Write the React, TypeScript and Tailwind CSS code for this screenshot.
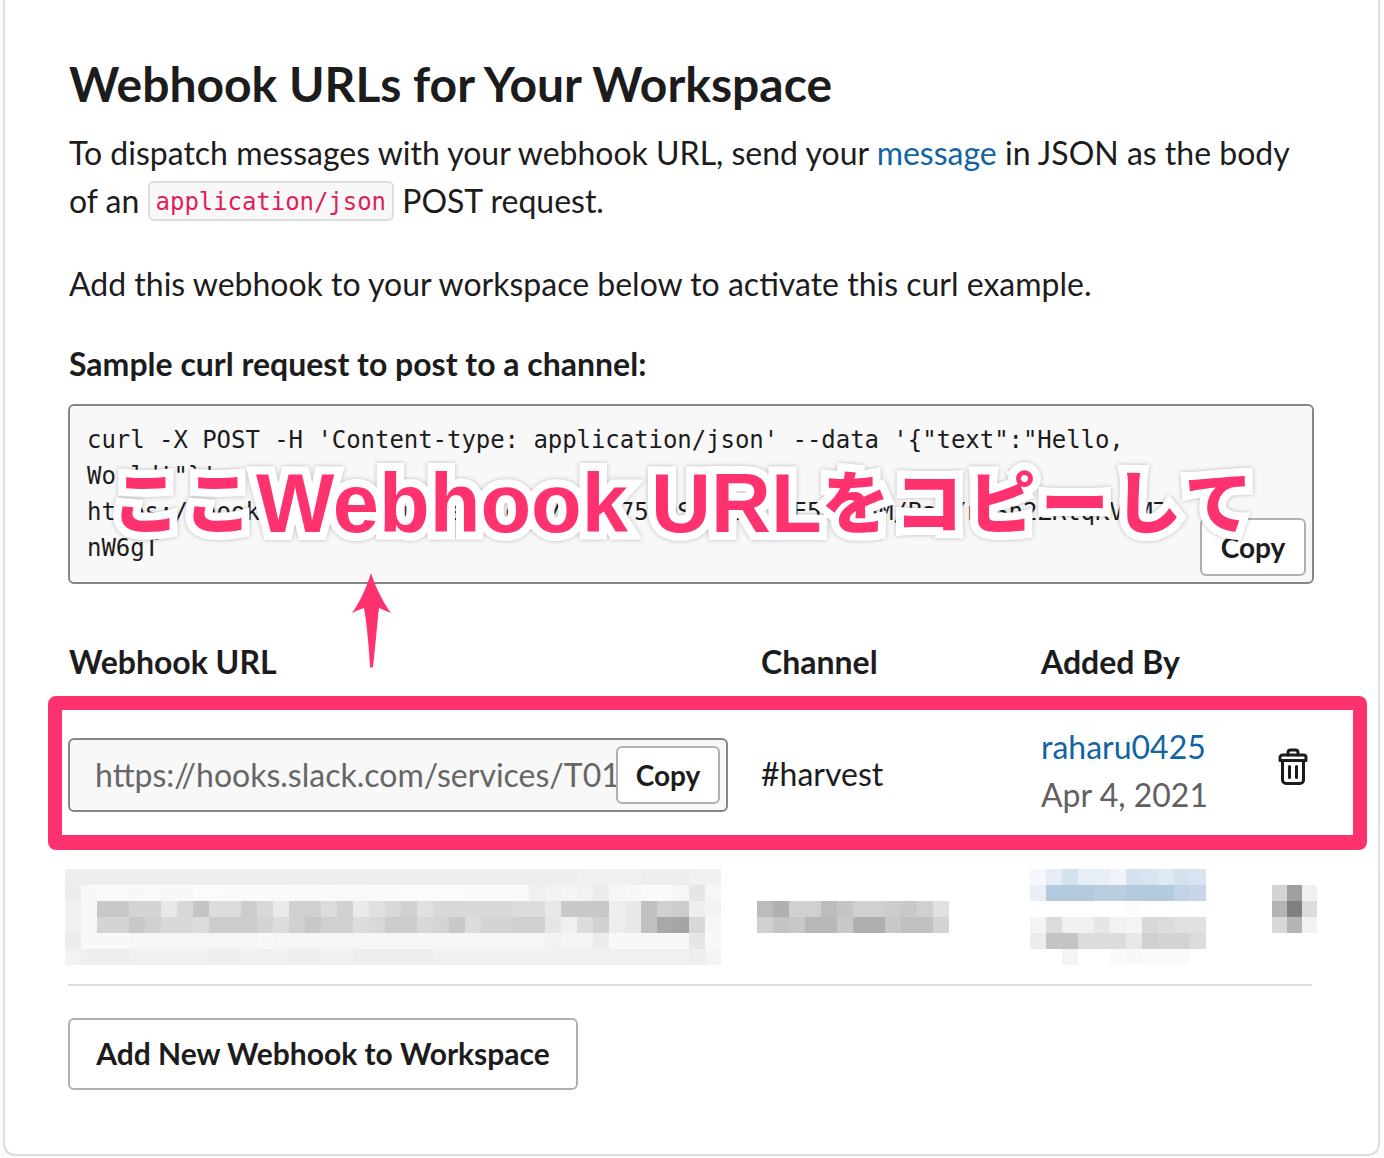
const urlMosaic = [
  'ee ee ee ee ee ee ee ee ee ee ee ee ee ee ee ee ee ee ee ee ee ee ee ee ee ee ee ee ee ee ee ee f0 f0 f0 f0 ee ee ee f0 f0',
  'ec f8 f9 f9 f8 f9 f8 f8 fb fb fa fa fa fa f9 f9 fa f9 f9 fa fa fb fb fb fb fa fa fa fa f0 f2 f4 f2 ec f6 f8 fa fa f6 e6 f6',
  'f0 f8 c8 c8 d4 d4 e8 d8 c4 dc dc cc d8 ea d0 d0 dc d0 ea e0 d8 d0 e0 d8 d8 d8 d8 d8 dc dc e8 c8 c8 c8 ee e8 c0 d0 cc ee f2',
  'f0 f8 d4 d4 c8 d0 d8 d8 dc cc cc cc d4 dc d0 c8 d0 d0 dc d8 cc cc d8 d4 c8 dc d4 d4 d0 d0 e6 f0 dc d0 ee e8 c0 a8 a4 d8 f6',
  'ec f8 f8 f8 f6 f6 f6 f6 f6 f6 f6 f6 f8 f6 f6 f6 f6 f6 f6 f6 f6 f6 f6 f6 f6 f6 f6 f6 f6 f6 f2 f4 f4 ec f8 f8 f8 f8 f8 e6 f8',
  'f2 ee ee ee f0 f0 f0 f0 f0 ef ef f0 f0 f0 ef ef f0 f0 ee ee ee ee ee f0 f0 f0 f0 f0 f0 f0 f0 f0 f0 f0 f0 f0 f0 f0 f0 ee f4',
]
const channelMosaic = [
  'bc b0 d0 d0 bc c4 d0 d0 cc c8 d0 e0',
  'd0 c4 c8 b8 b8 c8 b0 b0 c8 c0 c0 d4',
]
const nameMosaic = [
  'f4f7fb e6edf5 d4e1ee e8eef5 e8eef5 f0f4f9 d4e1ee d8e4ef e0e9f2 d4e1ee d8e4ef',
  'e8eff6 b4cade b4cade b2c9de bacee2 bacee2 b4cade b4cade b4cade c2d3e5 c6d7e8',
  'ffffff ffffff ffffff ffffff ffffff ffffff fbfcfd ffffff ffffff fbfdfe ffffff',
  'f4f4f4 dcdcdc f0f0f0 f0f0f0 e6e6e6 f2f2f2 f4f4f4 d8d8d8 dcdcdc e0e0e0 e0e0e0',
  'ececec c4c4c4 c4c4c4 dcdcdc dcdcdc dcdcdc e8e8e8 d0d0d0 d4d4d4 d4d4d4 dcdcdc',
  'ffffff ffffff f4f4f4 ffffff ffffff fafafa f8f8f8 fafafa fafafa fafafa ffffff',
]
const trashMosaic = [
  'd4 a0 f0',
  'b4 80 dc',
  'd8 b4 f2',
]

const Mosaic = ({ rows, cell = 'w-4' }: { rows: string[]; cell?: string }) => (
  <div className="flex flex-col shrink-0">
    {rows.map((row, i) => (
      <div key={i} className="flex">
        {row.split(' ').map((c, j) => (
          <div
            key={j}
            className={`${cell} h-4`}
            style={{ backgroundColor: c.length === 2 ? `#${c}${c}${c}` : `#${c}` }}
          />
        ))}
      </div>
    ))}
  </div>
)

const App = () => {
  return (
    <div className="w-[1384px] h-[1158px] bg-[#fbfbfb] overflow-hidden font-['Lato',sans-serif] text-[#1d1c1d]">
      <div className="relative w-[1377px] h-[1156px] ml-[3px] bg-white border-x-2 border-b-2 border-[#dedede] rounded-b-xl pl-[64px] pr-[65px]">
        <h1 className="pt-[54px] text-[48px] leading-[60px] font-bold">Webhook URLs for Your Workspace</h1>
        <p className="mt-[15px] text-[32px] leading-[48px]">
          To dispatch messages with your webhook URL, send your <a className="text-[#1264a3]">message</a> in JSON as the body of an{' '}
          <code className="inline-block h-[40px] px-[6px] align-[3px] leading-[38px] text-[24px] tracking-[-0.05px] text-[#e01e5a] bg-[#f8f8f8] border-2 border-[#dddddd] rounded-md font-['DejaVu_Sans_Mono',monospace]">application/json</code>{' '}
          POST request.
        </p>
        <p className="mt-[35px] text-[32px] leading-[48px]">Add this webhook to your workspace below to activate this curl example.</p>
        <h2 className="mt-[32px] text-[32px] leading-[48px] font-bold">Sample curl request to post to a channel:</h2>

        <div className="relative mt-[16px] w-[1246px] h-[180px] -ml-px pl-[17px] pr-[140px] pt-[16px] bg-[#f8f8f8] border-2 border-[#868686] rounded-md">
          <pre className="whitespace-pre-wrap break-words text-[24px] leading-[36px] tracking-[-0.05px] font-['DejaVu_Sans_Mono',monospace]">{`curl -X POST -H 'Content-type: application/json' --data '{"text":"Hello, World!"}' https://hooks.slack.com/services/T01Q75FQSUA/B01QE5NKXAM/BakYrQSn2ZRtqKVXM7nW6gT`}</pre>
          <button className="absolute right-[6px] bottom-[6px] w-[106px] h-[58px] bg-white border-2 border-[#b0b0b0] rounded-md text-[28px] font-bold">Copy</button>
        </div>

        <div className="flex mt-[54px] text-[32px] leading-[48px] font-bold">
          <div className="w-[692px]">Webhook URL</div>
          <div className="w-[280px]">Channel</div>
          <div>Added By</div>
        </div>

        <div className="flex items-center h-[144px] mt-[17px] text-[32px] leading-[48px]">
          <div className="relative w-[660px] h-[74px] -ml-px mr-[33px] pl-[25px] bg-[#f8f8f8] border-2 border-[#868686] rounded-md flex items-center text-[#666666] shrink-0">
            <div className="w-[523px] overflow-hidden whitespace-nowrap -mt-px">https://hooks.slack.com/services/T01Q75FQSUA/B01QE5NKXAM</div>
            <button className="absolute right-[6px] top-[6px] w-[104px] h-[58px] bg-white border-2 border-[#b0b0b0] rounded-md text-[28px] font-bold text-[#1d1c1d]">Copy</button>
          </div>
          <div className="w-[280px] -mt-[2px]">#harvest</div>
          <div className="w-[237px] -mt-[9px]">
            <div className="text-[#1264a3]">raharu0425</div>
            <div className="text-[#616061]">Apr 4, 2021</div>
          </div>
          <svg className="w-[30px] h-[38px] -mt-[16px]" viewBox="0 0 30 38" fill="none" stroke="#1d1c1d" strokeWidth="3" strokeLinejoin="round" strokeLinecap="round">
            <path d="M10 7V4.5A2.5 2.5 0 0 1 12.5 2h5A2.5 2.5 0 0 1 20 4.500V7" />
            <path d="M2 12.500V9.500A2.500 2.500 0 0 1 4.500 7h21A2.500 2.500 0 0 1 28 9.500V12.500Z" />
            <path d="M4.500 12.500V32A3.500 3.500 0 0 0 8 35.500h14A3.500 3.500 0 0 0 25.500 32V12.500" />
            <path d="M11.500 18.500V29.500M18.500 18.500V29.500" />
          </svg>
        </div>

        <div className="flex items-start mt-[22px] -ml-[4px] w-[1260px] h-[96px]">
          <Mosaic rows={urlMosaic} />
          <div className="w-[36px] shrink-0" />
          <div className="mt-[32px] shrink-0"><Mosaic rows={channelMosaic} /></div>
          <div className="w-[81px] shrink-0" />
          <Mosaic rows={nameMosaic} />
          <div className="w-[66px] shrink-0" />
          <div className="mt-[16px] shrink-0"><Mosaic rows={trashMosaic} cell="w-[15px]" /></div>
        </div>

        <div className="mt-[19px] -ml-px w-[1244px] h-[2px] bg-[#dddddd]" />
        <button className="mt-[32px] -ml-px w-[510px] h-[72px] pb-[2px] bg-white border-2 border-[#b0b0b0] rounded-md text-[30px] font-bold">Add New Webhook to Workspace</button>

        <div className="absolute left-[43px] top-[696px] w-[1319px] h-[154px] border-x-[14px] border-t-[14px] border-b-[15px] border-[#ff3270] rounded-lg" />

        <svg className="absolute left-[341px] top-[570px] w-[50px] h-[100px]" viewBox="0 0 50 100" fill="#ff3270">
          <path d="M25 3C29 16 37 32 45 43C40 41 36 39 33 38C31 55 29 80 27 97C25 98 25 98 24 97C23 80 21 55 18 38C14 39 10 41 6 43C14 32 21 16 25 3Z" />
        </svg>

        <div className="absolute left-[107px] top-[449px] whitespace-nowrap text-[68px] leading-[100px] font-black text-[#ff3270] font-['Noto_Sans_CJK_JP',sans-serif] [paint-order:stroke_fill] [-webkit-text-stroke:16px_#ffffff] [stroke-linejoin:round] [filter:drop-shadow(0_0_2px_#00000040)]">
          <span className="align-[4px] tracking-[4px]">ここ</span><span className="text-[83px] font-bold font-['Liberation_Sans',sans-serif]">Webhook URL</span><span className="align-[4px] tracking-[5px]">をコピーして</span>
        </div>
      </div>
    </div>
  )
}

export default App
